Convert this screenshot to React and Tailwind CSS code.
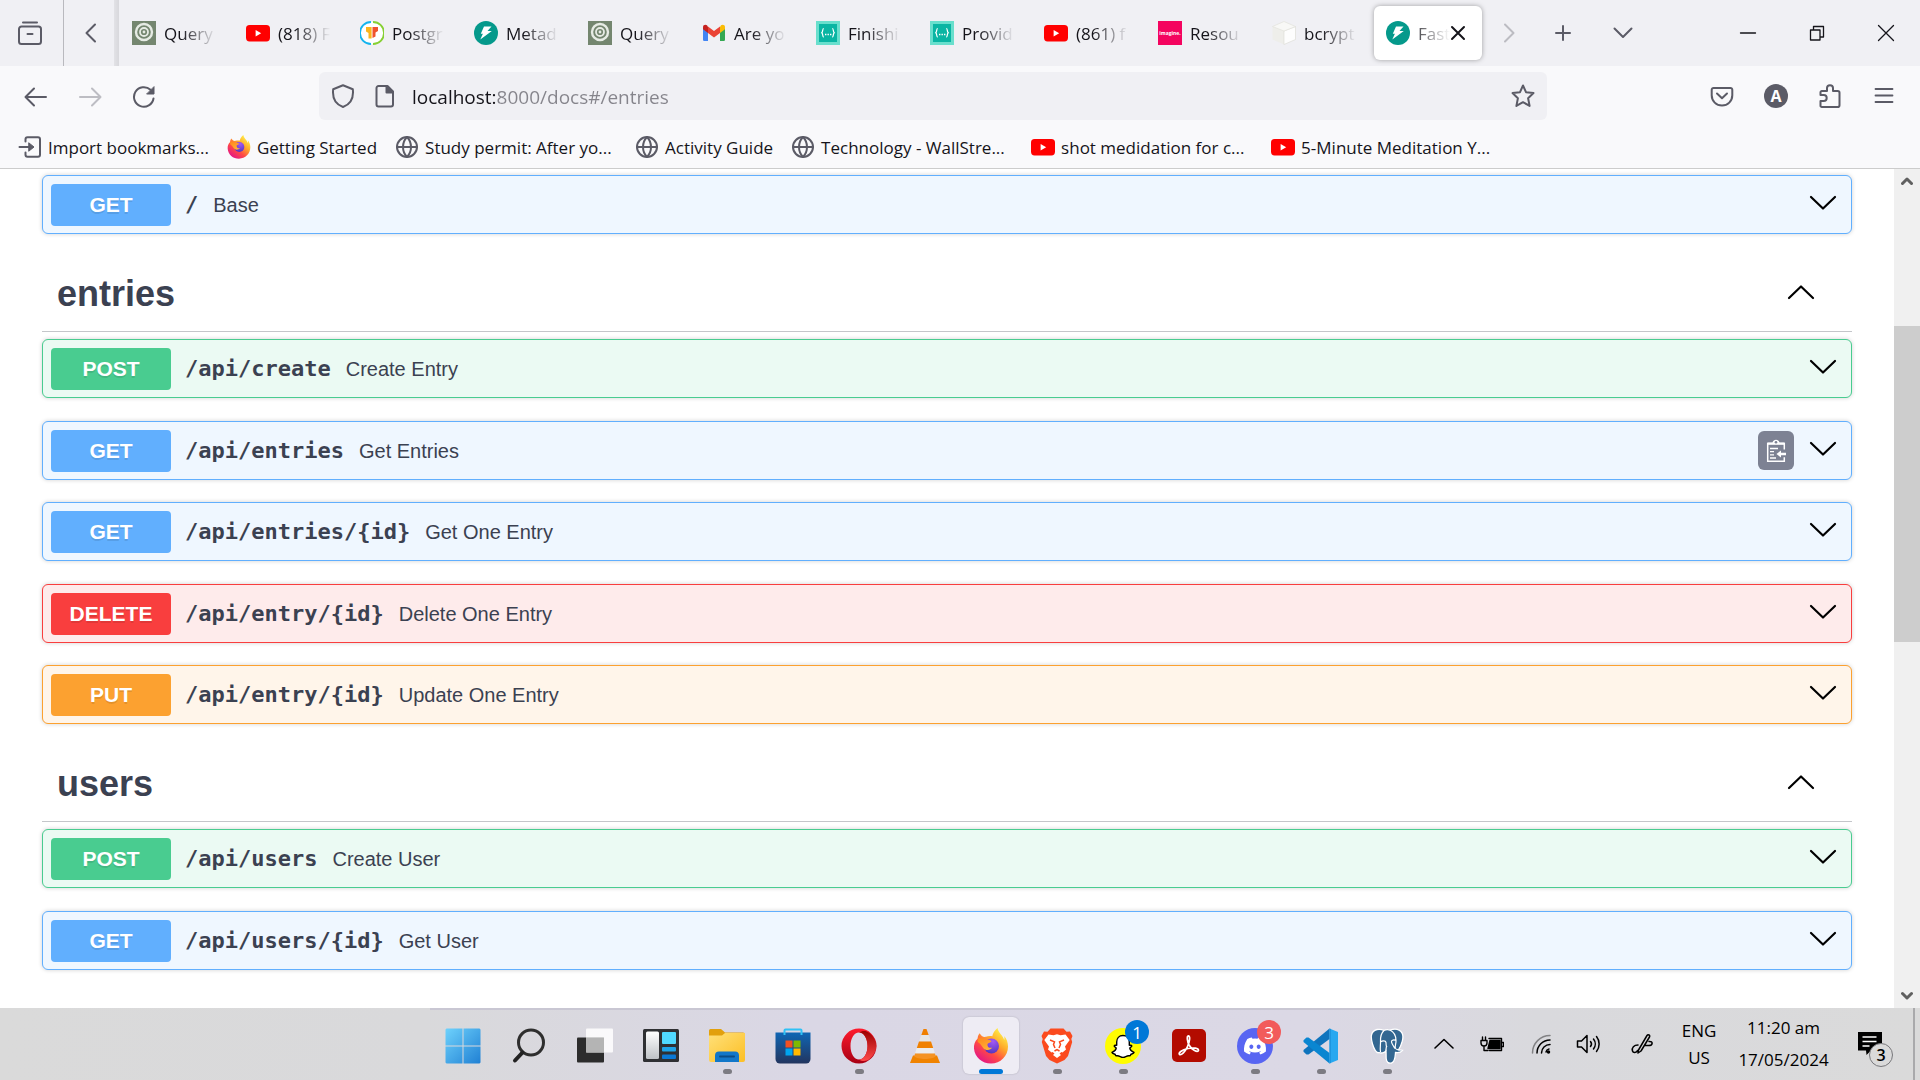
import React from "react";
import { Globe, Plus } from "lucide-react";
import { FaDiscord } from "react-icons/fa6";

const cx = (...a) => a.filter(Boolean).join(" ");

/* ---------- favicons ---------- */

function Target() {
  return (
    <svg viewBox="0 0 24 24" className="size-6 shrink-0">
      <rect width="24" height="24" fill="#74866f" />
      <circle cx="12" cy="11" r="8" fill="none" stroke="#e6ebe4" strokeWidth="2.4" />
      <circle cx="12" cy="11" r="4" fill="none" stroke="#e6ebe4" strokeWidth="1.8" />
      <circle cx="12" cy="11" r="1.4" fill="#e6ebe4" />
    </svg>
  );
}

function YouTube() {
  return (
    <svg viewBox="0 0 24 24" className="size-6 shrink-0">
      <rect x="0" y="4" width="24" height="16.4" rx="3.6" fill="#ff0000" />
      <path d="M9.6 9v6.4l5.6-3.2z" fill="#fff" />
    </svg>
  );
}

function PostgresTutorial() {
  return (
    <svg viewBox="0 0 24 24" className="size-6 shrink-0">
      <circle cx="12" cy="12" r="11" fill="#fff" />
      <path d="M11 1A11 11 0 0 0 11 23" fill="none" stroke="#14b4ee" strokeWidth="1.8" />
      <path d="M13 1A11 11 0 0 1 13 23" fill="none" stroke="#86d032" strokeWidth="1.8" />
      <path d="M6 6h5.600v11.500H8.500V12L6 10.500z" fill="#fbb51c" />
      <path d="M18 6h-5.500v11l3-1.500v-4l2.500-1.500z" fill="#f0532d" />
    </svg>
  );
}

function FastApi() {
  return (
    <svg viewBox="0 0 24 24" className="size-6 shrink-0">
      <circle cx="12" cy="12" r="12" fill="#05998b" />
      <path d="M10 5.500h7.500l-4 4.500h4.300L6.300 18.500l2.600-5.800H6.800z" fill="#fff" />
    </svg>
  );
}

function Gmail() {
  return (
    <svg viewBox="0 0 24 24" className="size-6 shrink-0">
      <path d="M1 7v11.5c0 1 .7 1.5 1.5 1.5H6V11z" fill="#4285f4" />
      <path d="M23 7v11.5c0 1-.7 1.5-1.5 1.5H18V11z" fill="#34a853" />
      <path d="M6 6v6L1 8.300V6.200C1 3.800 3.500 3.200 5 4.300z" fill="#c5221f" />
      <path d="M18 6v6l5-3.700V6.200c0-2.400-2.500-3-4-1.900z" fill="#fbbc04" />
      <path d="M6 5.500l6 4.500 6-4.500V12l-6 4.500L6 12z" fill="#ea4335" />
    </svg>
  );
}

function Braces() {
  return (
    <svg viewBox="0 0 24 24" className="size-6 shrink-0">
      <rect width="24" height="24" fill="#69dfcd" />
      <rect x="3" y="3" width="18" height="18" fill="#0ab5a3" />
      <path
        d="M7.800 7.500c-1.600 0-.6 3.200-2 4.300 1.400 1.100.4 4.300 2 4.300M16.200 7.500c1.600 0 .6 3.200 2 4.300-1.400 1.100-.4 4.300-2 4.300"
        fill="none"
        stroke="#fff"
        strokeWidth="1.200"
      />
      <path d="M9 13.500h1.400M11.500 13.500h1.400M14 13.500h1.400" stroke="#fff" strokeWidth="1.300" />
    </svg>
  );
}

function Imagine() {
  return (
    <span className="flex size-6 shrink-0 items-center justify-center bg-[#f4045f] font-['Open_Sans',sans-serif] text-[5px] leading-none font-bold text-white">
      imagine.
    </span>
  );
}

function Box() {
  return (
    <svg viewBox="0 0 24 24" className="size-6 shrink-0">
      <path d="M12 .5l11.500 5v13L12 23.500.5 18.500v-13z" fill="#eeeeea" />
      <path d="M12 10l11.500-4.500v13L12 23.500z" fill="#fdfdfd" stroke="#deded8" strokeWidth=".7" />
      <path d="M12 .5l11.500 5L12 10 .5 5.500z" fill="#f8f8f6" stroke="#e2e2dc" strokeWidth=".7" />
    </svg>
  );
}

function Firefox({ className = "size-6" }) {
  const id = React.useId();
  return (
    <svg viewBox="0 0 36 36" className={cx("shrink-0", className)}>
      <defs>
        <linearGradient id={id + "a"} x1="0.85" y1="0.1" x2="0.2" y2="0.95">
          <stop offset="0" stopColor="#fff14a" />
          <stop offset=".35" stopColor="#ffa72a" />
          <stop offset=".65" stopColor="#ff4a45" />
          <stop offset="1" stopColor="#e31587" />
        </linearGradient>
        <radialGradient id={id + "b"} cx=".6" cy=".2" r=".9">
          <stop offset="0" stopColor="#a259f5" />
          <stop offset="1" stopColor="#4b32b8" />
        </radialGradient>
        <linearGradient id={id + "c"} x1="0.2" y1="0" x2="0.8" y2="1">
          <stop offset="0" stopColor="#ff8a1e" />
          <stop offset="1" stopColor="#ffb338" />
        </linearGradient>
      </defs>
      <path
        d="M24.500 0c-3 2.600-4.800 5.400-5.200 8.300-2-.4-4.600-.2-6.300.5C9.900 9.300 8.200 7.900 6.700 5.200 5.300 6.600 4.600 8.600 4.700 10.600 1.600 13.700.8 17 1 20.500 1.700 29.300 9 35.500 18 35.500c9.500 0 17-7.400 17-17 0-4-1.300-7.800-3.800-10.600.4 1.900.3 3.100 0 4-1-4.200-6-7-6.700-11.900z"
        fill={"url(#" + id + "a)"}
      />
      <circle cx="18.500" cy="18" r="7.500" fill={"url(#" + id + "b)"} />
      <path
        d="M4.700 10.600c3-1.200 6.500-.6 8.600 1.500 2.200-.6 4.200 0 5.200 1.200-.6 1.300-3.300 1.700-4 2.600-.4 3 1.800 4.500 4.700 3.700-1.700 3-6.700 3.300-9 .3C8.600 17.700 6.900 15 4.700 14z"
        fill={"url(#" + id + "c)"}
      />
    </svg>
  );
}

/* ---------- browser chrome ---------- */

function Line({ d, className = "size-6", w = 2, box = "0 0 24 24", children }) {
  return (
    <svg
      viewBox={box}
      className={cx("shrink-0", className)}
      fill="none"
      stroke="currentColor"
      strokeWidth={w}
      strokeLinecap="round"
      strokeLinejoin="round"
    >
      {d && <path d={d} />}
      {children}
    </svg>
  );
}

const tabs = [
  [Target, "Query"],
  [YouTube, "(818) F"],
  [PostgresTutorial, "Postgr"],
  [FastApi, "Metad"],
  [Target, "Query"],
  [Gmail, "Are yo"],
  [Braces, "Finishi"],
  [Braces, "Provid"],
  [YouTube, "(861) f"],
  [Imagine, "Resou"],
  [Box, "bcrypt"],
];

function IconButton({ label, className, children }) {
  return (
    <button type="button" aria-label={label} className={cx("flex items-center justify-center", className)}>
      {children}
    </button>
  );
}

function TabBar() {
  return (
    <div className="flex h-[66px] shrink-0 items-stretch bg-[#f0f0f4] text-[#5b5b66]">
      <IconButton label="Recent browsing" className="w-[63px] shrink-0 pr-1">
        <Line d="M5 1.500h14M3.500 5.500h17a2.500 2.500 0 0 1 2.500 2.500v12.500a2.500 2.500 0 0 1-2.500 2.500h-17A2.500 2.500 0 0 1 1 20.500V8a2.500 2.500 0 0 1 2.500-2.500zM9.500 13h5" />
      </IconButton>
      <div className="w-px bg-[#b9b9be]" />
      <IconButton label="Scroll tabs left" className="w-[50px] shrink-0 pl-1">
        <Line d="M16 3.500L7.500 12l8.500 8.500" />
      </IconButton>
      <div className="w-[5px] shrink-0 bg-linear-to-r from-[#e2e2e6] to-[#d8d8dc]" />
      <div role="tablist" className="flex items-center">
        {tabs.map(([Icon, title], i) => (
          <button
            key={i}
            type="button"
            role="tab"
            className="flex w-[114px] shrink-0 items-center gap-2 pr-3 pl-[13px] text-left"
          >
            <Icon />
            <span className="min-w-0 flex-1 overflow-hidden pt-0.5 text-[17px] whitespace-nowrap text-[#15141a] mask-[linear-gradient(to_right,black_30%,transparent_92%)]">
              {title}
            </span>
          </button>
        ))}
        <div className="mr-[3px] ml-px flex h-[54px] w-[108px] items-center rounded-md bg-white pr-4 pl-3 shadow-[0_0_5px_rgba(0,0,0,0.35)]">
          <button type="button" role="tab" aria-selected="true" className="flex min-w-0 flex-1 items-center gap-2 text-left">
            <FastApi />
            <span className="min-w-0 flex-1 overflow-hidden pt-0.5 text-[17px] whitespace-nowrap text-[#15141a] mask-[linear-gradient(to_right,rgba(0,0,0,0.75),transparent)]">
              Fast
            </span>
          </button>
          <IconButton label="Close tab" className="-mx-1 text-[#15141a]">
            <Line d="M6 6l12 12M18 6L6 18" />
          </IconButton>
        </div>
      </div>
      <IconButton label="Scroll tabs right" className="w-12 shrink-0 text-[#bcbcc2]">
        <Line d="M8 3.500l8.500 8.500L8 20.500" />
      </IconButton>
      <IconButton label="New tab" className="w-[60px] shrink-0">
        <Plus className="size-6" />
      </IconButton>
      <IconButton label="List all tabs" className="w-[60px] shrink-0">
        <Line d="M3.500 7.500l8.500 8.500 8.500-8.500" />
      </IconButton>
      <div className="flex-1" />
      <div className="flex text-[#15141a]">
        <IconButton label="Minimize" className="w-[69px]">
          <Line d="M4.500 12h15" w={1.3} />
        </IconButton>
        <IconButton label="Restore" className="w-[69px]">
          <Line w={1.3} d="M5.500 9h9.500v10H5.500zM8.500 9V5.500H18.500V16H15" />
        </IconButton>
        <IconButton label="Close window" className="w-[69px]">
          <Line w={1.3} d="M4.500 4.500l15 15M19.500 4.500l-15 15" />
        </IconButton>
      </div>
    </div>
  );
}

function Toolbar() {
  return (
    <div className="flex h-[60px] shrink-0 items-center bg-[#f9f9fb] text-[#5b5b66]">
      <div className="flex items-center pl-6">
        <IconButton label="Back" className="w-[54px] justify-start">
          <Line d="M22 13H2M10 4.500L1.500 13l8.500 8.500" />
        </IconButton>
        <IconButton label="Forward" className="w-[54px] justify-start text-[#bdbdc3]">
          <Line d="M2 13h20M14 4.500l8.500 8.500-8.500 8.500" />
        </IconButton>
        <IconButton label="Reload" className="w-[54px] justify-start">
          <Line d="M21.500 14.500A9.800 9.800 0 1 1 18.500 5.800">
            <path d="M22 3v7h-7z" fill="currentColor" strokeWidth="1" />
          </Line>
        </IconButton>
      </div>
      <form className="mr-[163px] ml-[133px] flex h-12 min-w-0 flex-1 items-center rounded-md bg-[#f0f0f4] px-3">
        <Line d="M12 1.200l9.800 4c1 8.300-1.500 14.800-9.800 17.800C3.700 20 1.200 13.500 2.200 5.200z" />
        <Line className="ml-[18px] size-6" d="M5.500 2h9l5.500 5.500v13a2 2 0 0 1-2 2H5.500a2 2 0 0 1-2-2V4a2 2 0 0 1 2-2z">
          <path d="M13.500 2.500l6 6h-6z" fill="currentColor" />
        </Line>
        <input
          aria-label="Address"
          defaultValue="localhost:8000/docs#/entries"
          className="ml-[15px] min-w-0 flex-1 bg-[linear-gradient(to_right,#15141a_84px,#85848b_84px)] bg-clip-text pt-0.5 text-[19px] leading-8 text-transparent outline-none"
        />
        <IconButton label="Bookmark this page">
          <Line d="M12 1.500l3 6.700 7.500.9-5.400 5.100 1.500 7.700L12 18.200l-6.600 3.700 1.500-7.700L1.500 9.100 9 8.200z" />
        </IconButton>
      </form>
      <div className="flex items-center gap-[30px] pr-6">
        <IconButton label="Save to Pocket">
          <Line d="M3.500 4h17A1.800 1.800 0 0 1 22.300 5.800v5.500a10.300 10.300 0 0 1-20.600 0V5.800A1.800 1.800 0 0 1 3.500 4zM7 9.500l5 4.700 5-4.700" />
        </IconButton>
        <IconButton label="Account" className="size-6 rounded-full bg-[#5b5b66] text-base font-bold text-white">
          A
        </IconButton>
        <IconButton label="Extensions">
          <Line d="M2.500 11V8.300a1.300 1.300 0 0 1 1.300-1.300H9V4a3 2.800 0 0 1 6 0v3h4.700A1.800 1.800 0 0 1 21.500 8.800v12.400a1.800 1.800 0 0 1-1.800 1.800H3.800a1.300 1.300 0 0 1-1.300-1.300V17h3.200a3 3 0 0 0 0-6z" />
        </IconButton>
        <IconButton label="Menu">
          <Line d="M3.500 5h17M3.500 11.500h17M3.500 18h17" w={1.800} />
        </IconButton>
      </div>
    </div>
  );
}

function ImportIcon() {
  return (
    <Line d="M1.500 12h12M7.500 6.500V4.300a2 2 0 0 1 2-2H20a2 2 0 0 1 2 2v15.400a2 2 0 0 1-2 2H9.500a2 2 0 0 1-2-2v-2.200">
      <path d="M11 8l5 4-5 4z" fill="currentColor" strokeWidth="1" />
    </Line>
  );
}
const GlobeIcon = () => <Globe className="size-6 shrink-0" strokeWidth={2} />;

const bookmarks = [
  [ImportIcon, "Import bookmarks..."],
  [Firefox, "Getting Started"],
  [GlobeIcon, "Study permit: After yo...", true],
  [GlobeIcon, "Activity Guide"],
  [GlobeIcon, "Technology - WallStre...", true],
  [YouTube, "shot medidation for c...", true],
  [YouTube, "5-Minute Meditation Y...", true],
];

function Bookmarks() {
  return (
    <nav className="flex h-[43px] shrink-0 items-center gap-[18px] border-b border-[#cccccc] bg-[#f9f9fb] pl-[18px] text-[#5b5b66]">
      {bookmarks.map(([Icon, title, wide], i) => (
        <a key={i} href="#" className="flex shrink-0 items-center gap-1.5">
          <Icon />
          <span className={cx("pt-0.5 text-[17px] whitespace-nowrap text-[#15141a]", wide && "w-48")}>{title}</span>
        </a>
      ))}
    </nav>
  );
}

/* ---------- API docs ---------- */

const tones = {
  GET: ["border-[#61affe] bg-[#eff7ff]", "bg-[#61affe]"],
  POST: ["border-[#49cc90] bg-[#ebfaf3]", "bg-[#49cc90]"],
  DELETE: ["border-[#f93e3e] bg-[#feebeb]", "bg-[#f93e3e]"],
  PUT: ["border-[#fca130] bg-[#fff5ea]", "bg-[#fca130]"],
};

function Chevron({ up }) {
  return (
    <svg viewBox="0 0 30 30" className="size-[30px] shrink-0 text-black" fill="none" stroke="currentColor" strokeWidth="2.2" strokeLinecap="round" strokeLinejoin="round">
      <path d={up ? "M3 19L15 7.500 27 19" : "M3 7l12 11.500L27 7"} />
    </svg>
  );
}

function Operation({ method, path, summary, copy }) {
  const [row, badge] = tones[method];
  return (
    <div className={cx("flex h-[59px] items-center rounded-md border pr-[13px] pl-2 shadow-[0_0_4px_rgba(0,0,0,0.19)] odd:mb-[23px] even:mb-[22px]", row)}>
      <button type="button" className="flex min-w-0 flex-1 items-center text-left text-[#3b4151]">
        <span
          className={cx(
            "flex h-[42px] w-[120px] items-center justify-center rounded-[4px] text-[21px] font-bold text-white [text-shadow:0_2px_0_rgba(0,0,0,0.1)]",
            badge
          )}
        >
          {method}
        </span>
        <span className="ml-[14px] font-['DejaVu_Sans_Mono',monospace] text-[22px] font-bold">{path}</span>
        <span className="ml-[15px] text-[20px]">{summary}</span>
      </button>
      {copy && (
        <IconButton label="Copy to clipboard" className="mr-[14px] h-[39px] w-9 rounded-md bg-[#7d8293] text-white">
          <svg viewBox="0 0 20 24" className="h-6 w-5" fill="none" stroke="currentColor">
            <path d="M18.300 10.500V4.500H1.700v17.800h16.600v-4" strokeWidth="1.500" />
            <path d="M1.500 5.700h17V3.500h-5c-1-3.800-6-3.800-7 0h-5z" fill="currentColor" stroke="none" />
            <circle cx="10" cy="3.200" r="1.300" fill="#7d8293" stroke="none" />
            <path d="M4 9.500h8M4 12.700h4M4 15.800h4M4 19h6" strokeWidth="1.300" />
            <path d="M10.500 15l4.500-3.500v2.300h5v2.500h-5v2.300z" fill="currentColor" stroke="none" />
          </svg>
        </IconButton>
      )}
      <IconButton label={"Expand " + path}>
        <Chevron />
      </IconButton>
    </div>
  );
}

function Section({ title, ops }) {
  return (
    <section>
      <div className="mb-[7px] flex h-[75px] items-center justify-between border-b border-[#c4c6ca] pr-9 pl-[15px]">
        <h3 className="text-[36px] font-bold text-[#3b4151]">{title}</h3>
        <IconButton label={"Collapse " + title}>
          <Chevron up />
        </IconButton>
      </div>
      <div>
        {ops.map((o) => (
          <Operation key={o.method + o.path} {...o} />
        ))}
      </div>
    </section>
  );
}

function Docs() {
  return (
    <main className="min-w-0 flex-1 overflow-hidden bg-white px-[42px] pt-1.5 font-['Liberation_Sans',Arial,sans-serif]">
      <div>
        <Operation method="GET" path="/" summary="Base" />
      </div>
      <Section
        title="entries"
        ops={[
          { method: "POST", path: "/api/create", summary: "Create Entry" },
          { method: "GET", path: "/api/entries", summary: "Get Entries", copy: true },
          { method: "GET", path: "/api/entries/{id}", summary: "Get One Entry" },
          { method: "DELETE", path: "/api/entry/{id}", summary: "Delete One Entry" },
          { method: "PUT", path: "/api/entry/{id}", summary: "Update One Entry" },
        ]}
      />
      <Section
        title="users"
        ops={[
          { method: "POST", path: "/api/users", summary: "Create User" },
          { method: "GET", path: "/api/users/{id}", summary: "Get User" },
        ]}
      />
    </main>
  );
}

function Scrollbar() {
  return (
    <div className="flex w-[26px] shrink-0 flex-col bg-[#f0f0f0] text-[#606060]">
      <IconButton label="Scroll up" className="h-6">
        <Line box="0 0 12 10" className="h-2.5 w-3" w={3} d="M1.500 7.500L6 3l4.500 4.500" />
      </IconButton>
      <div className="grow-[133]" />
      <div className="grow-[316] bg-[#cdcdcd]" />
      <div className="grow-[342]" />
      <IconButton label="Scroll down" className="h-6">
        <Line box="0 0 12 10" className="h-2.5 w-3" w={3} d="M1.500 2.500L6 7l4.500-4.500" />
      </IconButton>
    </div>
  );
}

/* ---------- taskbar ---------- */

const Svg = ({ children, className = "size-9", box = "0 0 36 36" }) => (
  <svg viewBox={box} className={className}>
    {children}
  </svg>
);

const Windows = () => (
  <Svg>
    <defs>
      <linearGradient id="win" x1="0" y1="0" x2="36" y2="36" gradientUnits="userSpaceOnUse">
        <stop offset="0" stopColor="#6fd3fd" />
        <stop offset="1" stopColor="#1f7fd3" />
      </linearGradient>
    </defs>
    <path d="M1.500.5H17.500V17.500H.5V1.500zM18.500.5H34.500L35.500 1.500V17.500H18.500zM.5 18.500H17.500V35.500H1.500L.5 34.500zM18.500 18.500H35.500V34.500L34.500 35.500H18.500z" fill="url(#win)" />
  </Svg>
);
const SearchGlass = () => (
  <Svg>
    <circle cx="20" cy="14.500" r="12.500" fill="none" stroke="#2e2e2e" strokeWidth="3" />
    <path d="M11.500 24.500L4 32.500" stroke="#222" strokeWidth="4" strokeLinecap="round" />
  </Svg>
);
const TaskView = () => (
  <Svg>
    <rect x="0" y="9.500" width="27" height="25" rx="1" fill="#2c2c2c" />
    <rect x="9" y=".5" width="27" height="24" rx="1" fill="#fff" opacity=".85" />
    <rect x="9" y="9.500" width="18" height="15" fill="#b4b4b4" />
  </Svg>
);
const Widgets = () => (
  <Svg>
    <defs>
      <linearGradient id="wg" x1="0" y1="0" x2="0" y2="1">
        <stop offset="0" stopColor="#fff" />
        <stop offset="1" stopColor="#bfc2c6" />
      </linearGradient>
    </defs>
    <rect y="1" width="36" height="33" rx="1.500" fill="#2f3033" />
    <rect x="3" y="3.500" width="13" height="27.500" rx="1.500" fill="url(#wg)" />
    <rect x="19" y="4" width="14" height="12" rx="1" fill="#50d9ff" />
    <rect x="19" y="19" width="14" height="4.500" rx="1" fill="#1fa4e8" />
    <rect x="19" y="26.500" width="14" height="4.500" rx="1" fill="#0b78d4" />
  </Svg>
);
const Explorer = () => (
  <Svg>
    <defs>
      <linearGradient id="fo" x1="0" y1="0" x2="1" y2="1">
        <stop offset="0" stopColor="#ffe07a" />
        <stop offset="1" stopColor="#fcbf24" />
      </linearGradient>
    </defs>
    <path d="M0 2.500A1.500 1.500 0 0 1 1.500 1H12l4 3.500h18a2 2 0 0 1 2 2V12H0z" fill="#e2a00d" />
    <path d="M0 7.500h13l3-2.500h20v27a2 2 0 0 1-2 2H2a2 2 0 0 1-2-2z" fill="url(#fo)" />
    <path d="M6 34v-6.500a4 4 0 0 1 4-4h16a4 4 0 0 1 4 4V34z" fill="#1277c9" />
    <path d="M11 28.500h14" stroke="#0a4c86" strokeWidth="2" strokeLinecap="round" />
  </Svg>
);
const Store = () => (
  <Svg>
    <defs>
      <linearGradient id="st" x1="0" y1="0" x2="0" y2="1">
        <stop offset="0" stopColor="#0f66b4" />
        <stop offset="1" stopColor="#22355f" />
      </linearGradient>
    </defs>
    <path d="M.5 4.500h35V31a4.500 4.500 0 0 1-4.500 4.500H5A4.500 4.500 0 0 1 .5 31z" fill="url(#st)" />
    <path d="M9.500 7V2.500a1 1 0 0 1 1-1h15a1 1 0 0 1 1 1V7" fill="none" stroke="#2fc1f5" strokeWidth="2" />
    <path d="M10.500 12.500h7v7h-7z" fill="#f25022" />
    <path d="M18.500 12.500h7v7h-7z" fill="#7fba00" />
    <path d="M10.500 20.500h7v7h-7z" fill="#00a4ef" />
    <path d="M18.500 20.500h7v7h-7z" fill="#ffb900" />
  </Svg>
);
const Opera = () => (
  <Svg>
    <defs>
      <linearGradient id="op" x1="0" y1="0" x2="0" y2="1">
        <stop offset="0" stopColor="#ff1b2d" />
        <stop offset="1" stopColor="#a70014" />
      </linearGradient>
      <linearGradient id="op2" x1="0" y1="0" x2="0" y2="1">
        <stop offset="0" stopColor="#9c0000" />
        <stop offset="1" stopColor="#ff4b4b" />
      </linearGradient>
    </defs>
    <path
      fillRule="evenodd"
      d="M18 .5a17.300 17.300 0 1 1 0 35 17.300 17.300 0 1 1 0-35zM18 4.500c-5 0-8.500 6-8.500 13.500S13 31.500 18 31.500 26.500 25.500 26.500 18 23 4.500 18 4.500z"
      fill="url(#op)"
    />
    <path d="M18 4.500c3-2 7-2.300 10.500.6 9 7.500 9 18.500 0 26-3.500 2.700-7.500 2.400-10.500.4 5 0 8.500-6 8.500-13.500S23 4.500 18 4.500z" fill="url(#op2)" />
  </Svg>
);
const Vlc = () => (
  <Svg>
    <path d="M6 27.500h24l3 7.500H3z" fill="#f08300" />
    <path d="M16.500 1h3l2.200 6h-7.400z" fill="#f08000" />
    <path d="M14.300 7h7.400l2.300 6.500H12z" fill="#e6e6e6" />
    <path d="M12 13.500h12l2.200 6.500H9.800z" fill="#f08000" />
    <path d="M9.800 20h16.400l1.800 5.500H8z" fill="#ececec" />
    <path d="M8 25.500h20l.6 3c-3 3.300-18.200 3.300-21.200 0z" fill="#f59322" />
  </Svg>
);
const Brave = () => (
  <Svg>
    <path d="M11.500.5h13l3 3.300 3.500-.3 2.500 4.500-1.200 3 .9 3L29 28l-3.500 4L18 35.500 10.500 32 7 28 2.800 14l.9-3L2.500 8 5 3.500l3.500.3z" fill="#fb4a1e" />
    <path
      d="M9.500 6.500l5 .8 3.500-1 3.500 1 5-.8 4.200 5.500-4.700 6.500 1 3-3.500 3-1-.5-2 1.500 1.500 1.500-4 3-4-3 1.500-1.500-2-1.500-1 .5-3.500-3 1-3L5.300 12z"
      fill="#fff"
    />
    <path d="M11 12l4.500 1.800-1 2.700 1.500 3.500M25 12l-4.500 1.800 1 2.700-1.500 3.500M15.500 23l2.500-1.500 2.500 1.500" stroke="#fb4a1e" strokeWidth="1.500" fill="none" />
  </Svg>
);
const Snap = () => (
  <Svg>
    <circle cx="18" cy="18" r="18" fill="#fffc00" />
    <path
      d="M18 7.500c4 0 6.300 2.800 6.300 6.600v3c.8.500 2.200-.2 2.500.8.200 1-1.800 1.400-2 2.300.4 2.600 2.800 3.600 4.200 4.200-.2 1.600-2.400 1.500-3.200 2-.3 1-.3 1.600-1.600 1.400-2.700-.4-3.700 1.600-6.200 1.600s-3.500-2-6.200-1.600c-1.300.2-1.300-.4-1.600-1.400-.8-.5-3-.4-3.200-2 1.400-.6 3.800-1.600 4.200-4.200-.2-.9-2.200-1.300-2-2.300.3-1 1.700-.3 2.500-.8v-3c0-3.800 2.300-6.600 6.300-6.600z"
      fill="#fff"
      stroke="#000"
      strokeWidth="1.400"
    />
  </Svg>
);
const Acrobat = () => (
  <Svg>
    <rect x="1" y="1" width="34" height="33" rx="5" fill="#b30b00" />
    <path
      d="M17 8c2.500-.5 2 5-.5 10.500C14 24 10.500 27.500 8.500 26.500 7 25 10.500 22 17 20.500c5.500-1 10.500-.5 10.500 1.800-.5 2.700-7-.5-9.500-5.300-1.700-3.500-2.300-8.500-1-9z"
      fill="none"
      stroke="#fff"
      strokeWidth="1.700"
    />
  </Svg>
);
const Discord = () => (
  <span className="flex size-9 items-center justify-center rounded-full bg-[#5865f2] text-white">
    <FaDiscord className="size-6" />
  </span>
);
const VsCode = () => (
  <Svg>
    <path d="M26.500.5L35 4v28l-8.500 3.500z" fill="#27a8f0" />
    <path d="M26.500.5V11L5.500 26.500 3.500 26.500.5 23.800V22z" fill="#0f74bd" />
    <path d="M26.500 35.500V25L5.500 9.500H3.500L.5 12.200V14z" fill="#0a86d1" />
    <path d="M26.500.5V35.500L28 35V1z" fill="#1c96e0" />
  </Svg>
);
const Postgres = () => (
  <Svg>
    <path
      d="M8 1.500c2.500-.5 5 0 7 .9 2-.8 4-.9 6-.3 3-1 6.500-1.300 9 0 4 2 4.500 6.500 3.300 11-.8 3-2 6-3.800 8.700 1 .4 3 .3 4 .5-1.500 2-4.500 2.600-7 2.200-.3 3.500-.2 9.500-4 10.500-3.500.8-5-1.500-5.300-4.500-.2-2.500 0-5-.2-7.500-1.500 2-5 2.500-7 1.500C7.500 26 5 21 3.500 16 2 11 .5 3.500 8 1.500z"
      fill="#336791"
      stroke="#fff"
      strokeWidth="1.300"
    />
    <path
      d="M11.500 24c-.8-4 .2-6.500 0-10.500-.2-4 .8-8.500 3.500-11M17 23c-.5-2 .8-3 .3-5.500M11.500 14c2-1.500 5-1.500 5.500.5.3 1.500-.5 3 1 4.500M21 2c4 2 6 6.500 6 10.500-2-1-4.500-.5-4.500 1 0 2 1.500 4 3.500 7M27 12.500c.3 3-1.500 5.500-.5 8 .8 1 2 1.200 3 1.300"
      fill="none"
      stroke="#fff"
      strokeWidth="1.200"
    />
  </Svg>
);

const apps = [
  ["Start", Windows],
  ["Search", SearchGlass],
  ["Task view", TaskView],
  ["Widgets", Widgets],
  ["File Explorer", Explorer, "run"],
  ["Microsoft Store", Store],
  ["Opera", Opera, "run"],
  ["VLC", Vlc],
  ["Firefox", () => <Firefox className="size-9" />, "active"],
  ["Brave", Brave, "run"],
  ["Snapchat", Snap, "run", "1", "bg-[#0078d7]"],
  ["Acrobat", Acrobat],
  ["Discord", Discord, "run", "3", "bg-[#f25b5b]"],
  ["VS Code", VsCode, "run"],
  ["PostgreSQL", Postgres, "run"],
];

function Taskbar() {
  return (
    <footer className="flex h-[72px] shrink-0 items-stretch bg-[linear-gradient(to_right,#dadada_0%,#d9d9db_22%,#dad7e5_42%,#dbd8e5_68%,#d9d9dd_80%,#dadada_100%)] text-black">
      <div className="flex flex-1 justify-end">
        {apps.map(([name, Icon, state, count, tone]) => (
          <button key={name} type="button" aria-label={name} className="flex w-[66px] justify-center border-t-2 border-[#c9c7d3] pt-[7px] pb-1.5">
            <span className={cx("relative flex w-14 flex-col items-center justify-between rounded-md pt-[11px]", state === "active" && "bg-[#eeecf4] shadow-[0_0_2px_rgba(0,0,0,0.2)]")}>
              <Icon />
              {state === "run" && <span className="h-[5px] w-[9px] rounded-full bg-[#7c7b82]" />}
              {state === "active" && <span className="h-[5px] w-6 rounded-full bg-[#0078d7]" />}
              {count && (
                <span className={cx("absolute top-[3px] right-0.5 flex size-6 items-center justify-center rounded-full text-[17px] leading-none text-white", tone)}>
                  {count}
                </span>
              )}
            </span>
          </button>
        ))}
      </div>
      <div className="flex w-[500px] shrink-0 items-stretch">
        <IconButton label="Show hidden icons" className="w-12">
          <Line w={1.6} d="M3 16l9-8.500 9 8.500" />
        </IconButton>
        <IconButton label="Battery" className="w-12">
          <Line w={1.4} d="M9.500 18.500h12v-12H9M22.500 10.500h1v4h-1M1 8.500h6v2.500a3 3 0 0 1-6 0zM2.500 8V5M5.500 8V5M4 14v4.500h4">
            <path d="M10 8.500h10v8H8z" fill="currentColor" />
          </Line>
        </IconButton>
        <IconButton label="Network" className="w-12 pl-0.5">
          <Line w={1.5} d="M8 21A13 13 0 0 1 21 8M12.500 21A8.500 8.500 0 0 1 21 12.500">
            <path d="M3.500 21A17.500 17.500 0 0 1 21 3.500" opacity=".4" />
            <path d="M17 20a4 4 0 0 1 3-3" />
            <circle cx="19.500" cy="20" r="1" fill="currentColor" />
          </Line>
        </IconButton>
        <IconButton label="Volume" className="w-12">
          <Line w={1.5} d="M1.500 9h4L11 3.500v17L5.500 15h-4zM14.500 9.500a4 4 0 0 1 0 5M17.500 7a8 8 0 0 1 0 10M20.500 4.500a12 12 0 0 1 0 15" />
        </IconButton>
        <IconButton label="Pen" className="w-12 pl-3">
          <Line w={1.5} d="M8.500 18L17 3.500c1-1.500 3.500-.3 2.500 1.500L11 19l-3 2zM8 13c-4 0-6.500 2.500-5.500 6 .6 2 4 2 5-.5M19 9.500c4.500-.5 4 4-.5 4h-3" />
        </IconButton>
        <div className="flex w-[78px] flex-col items-center justify-center text-[17px] leading-[27px]">
          <span>ENG</span>
          <span>US</span>
        </div>
        <div className="flex flex-1 flex-col items-center justify-center pr-[18px] text-[17px] leading-8">
          <span>11:20 am</span>
          <span>17/05/2024</span>
        </div>
        <IconButton label="Notifications" className="relative mr-5 w-[46px]">
          <Svg className="size-6" box="0 0 24 24">
            <path d="M0 0h24v18.500H13L8.500 23 8 18.500H0z" />
            <path d="M4.500 5h14M4.500 9.500h14M4.500 14h7" stroke="#fff" strokeWidth="1.300" />
          </Svg>
          <span className="absolute right-0 bottom-[13px] flex size-6 items-center justify-center rounded-full border border-[#77777b] bg-[#dadada] text-base leading-none font-semibold">
            3
          </span>
        </IconButton>
        <button type="button" aria-label="Show desktop" className="w-[7px] border-l-2 border-[#a9a9ab]" />
      </div>
    </footer>
  );
}

export default function App() {
  return (
    <div className="flex h-screen flex-col overflow-hidden font-['Open_Sans',sans-serif]">
      <TabBar />
      <Toolbar />
      <Bookmarks />
      <div className="flex min-h-0 flex-1">
        <Docs />
        <Scrollbar />
      </div>
      <Taskbar />
    </div>
  );
}
